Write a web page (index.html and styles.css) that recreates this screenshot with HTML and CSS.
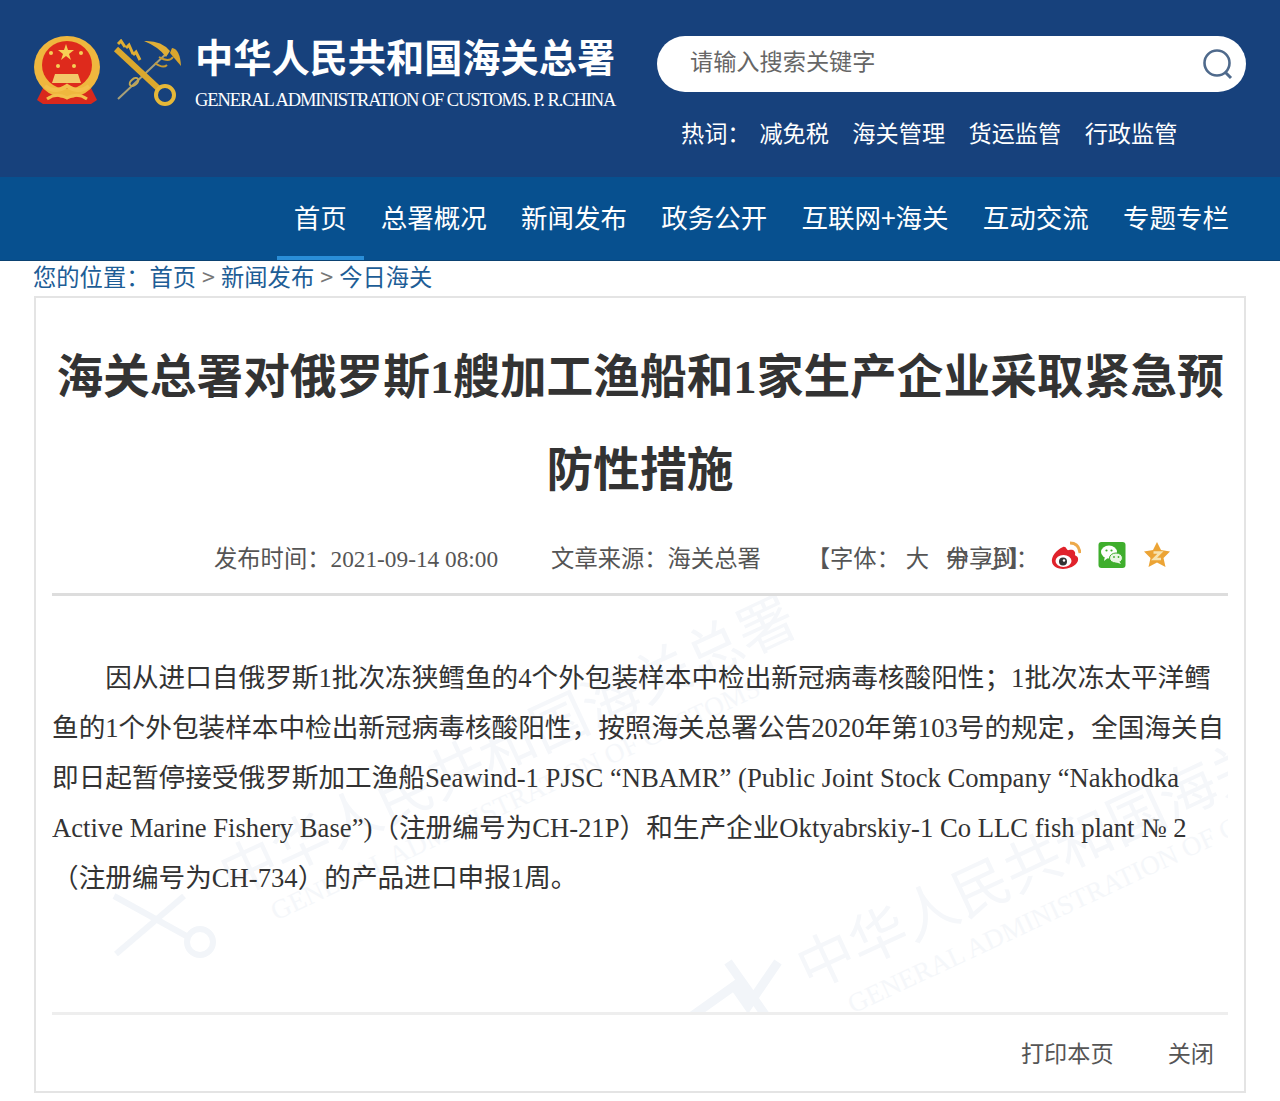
FILE: index.html
```html
<!DOCTYPE html>
<html lang="zh-CN">
<head>
	<meta charset="utf-8">
	<meta name="viewport" content="width=device-width, initial-scale=1">
	<title>海关总署对俄罗斯1艘加工渔船和1家生产企业采取紧急预防性措施</title>
	<link rel="stylesheet" href="styles.css">
</head>
<body>
<header class="top">
	<div class="brand">
		<svg class="emblem" viewBox="0 0 68 72" width="68" height="72">
			<path d="M10 52 L4 64 L10 68 L58 68 L64 64 L58 52 Z" fill="#d9281c"/>
			<ellipse cx="34" cy="31" rx="33" ry="31" fill="#efb73e"/>
			<ellipse cx="34" cy="29" rx="25" ry="24" fill="#de2a1c"/>
			<polygon points="33,8 35,14 41,14 36,18 38,24 33,20 28,24 30,18 25,14 31,14" fill="#f6cf55"/>
			<circle cx="18" cy="17" r="2" fill="#f6cf55"/>
			<circle cx="48" cy="17" r="2" fill="#f6cf55"/>
			<circle cx="25" cy="30" r="2" fill="#f6cf55"/>
			<circle cx="41" cy="30" r="2" fill="#f6cf55"/>
			<path d="M22 38 H45 L48 47 H19 Z" fill="#f3c869"/>
			<path d="M12 50 Q22 58 34 50 Q46 58 56 50" fill="none" stroke="#f3c04a" stroke-width="4"/>
			<path d="M14 63 Q24 56 34 62 Q44 56 54 63" fill="none" stroke="#f3c04a" stroke-width="3"/>
		</svg>
		<svg class="keys" viewBox="0 0 70 68" width="70" height="68">
			<path d="M54 14 L5 60" stroke="#a8a078" stroke-width="2" fill="none"/>
			<path d="M31 2 Q48 1 57 12 L53 18 Q46 8 31 2 Z" fill="#dfae37"/>
			<path d="M59 9 Q67 10 68 27 Q62 20 57 14 Z" fill="#d9a52d"/>
			<path d="M46 18 Q56 24 60 18 M42 24 Q50 30 54 26" stroke="#c79a30" stroke-width="2" fill="none"/>
			<path d="M3 10 L46 50" stroke="#dba82d" stroke-width="6" fill="none"/>
			<path d="M5 5 L8 2 L12 8 M13 9 L16 6 L20 15 M20 16 L23 13 L27 21" stroke="#e0ae33" stroke-width="3" fill="none"/>
			<circle cx="52" cy="56" r="9" fill="none" stroke="#e6b838" stroke-width="4"/>
			<ellipse cx="21" cy="43" rx="5" ry="3" fill="none" stroke="#c6a850" stroke-width="2" transform="rotate(-40 21 43)"/>
		</svg>
		<div class="brandText">
			<div class="brandCn">中华人民共和国海关总署</div>
			<div class="brandEn">GENERAL ADMINISTRATION OF CUSTOMS. P. R.CHINA</div>
		</div>
	</div>
	<div class="searchArea">
		<div class="searchBox">
			<span class="placeholder">请输入搜索关键字</span>
			<svg class="searchIcon" viewBox="0 0 32 32" width="32" height="32">
				<circle cx="15" cy="15" r="12.5" fill="none" stroke="#4f6a8c" stroke-width="2.6"/>
				<path d="M23 24 L29 30" stroke="#4f6a8c" stroke-width="3"/>
			</svg>
		</div>
		<ul class="hotWords">
			<li class="hotLabel">热词：</li>
			<li>减免税</li>
			<li>海关管理</li>
			<li>货运监管</li>
			<li>行政监管</li>
		</ul>
	</div>
</header>
<nav class="nav">
	<a class="active">首页</a>
	<a>总署概况</a>
	<a>新闻发布</a>
	<a>政务公开</a>
	<a>互联网+海关</a>
	<a>互动交流</a>
	<a>专题专栏</a>
</nav>
<div class="crumbs">您的位置：<a>首页</a><span class="sep">&gt;</span><a>新闻发布</a><span class="sep">&gt;</span><a>今日海关</a></div>
<section class="article">
	<h1 class="title">海关总署对俄罗斯1艘加工渔船和1家生产企业采取紧急预防性措施</h1>
	<div class="meta">
		<span class="metaTime">发布时间：2021-09-14 08:00</span>
		<span class="metaSource">文章来源：海关总署</span>
		<span class="metaFont">【字体： 大<a class="sizeMid">中</a><a class="sizeSmall">小</a>】<span class="shareLabel">分享到：</span></span>
		<div class="shareIcons">
			<svg viewBox="0 0 30 30" width="30" height="30">
				<path d="M12 7 C5 10 0 17 1 22 C2 28 10 30 16 28.500 C23 27 28 23 27 18 C26.500 16 24 15.500 24 15 C25 11 22 9 18 10 C15 11 16 6 12 7 Z" fill="#e0222b"/>
				<ellipse cx="12.500" cy="21" rx="8" ry="6" fill="#fff"/>
				<circle cx="12" cy="21.500" r="4" fill="#333"/>
				<circle cx="13" cy="20.500" r="1.200" fill="#fff"/>
				<path d="M19 3 Q28 3 29 13" fill="none" stroke="#eda94a" stroke-width="2.800"/>
			</svg>
			<svg viewBox="0 0 28 28" width="28" height="28">
				<rect x="0.500" y="1" width="27" height="26" rx="3" fill="#3fae2d"/>
				<ellipse cx="11" cy="11" rx="8" ry="6.500" fill="#fff"/>
				<path d="M7 15 L6 20 L11 16 Z" fill="#fff"/>
				<ellipse cx="18" cy="17" rx="6.500" ry="5" fill="#eaf6e4" stroke="#3fae2d"/>
				<path d="M21 20 L23 23 L17 21 Z" fill="#eaf6e4"/>
				<circle cx="8.500" cy="9.500" r="1.100" fill="#3fae2d"/>
				<circle cx="13.500" cy="9.500" r="1.100" fill="#3fae2d"/>
				<circle cx="16" cy="16" r="0.900" fill="#3fae2d"/>
				<circle cx="20.500" cy="16" r="0.900" fill="#3fae2d"/>
			</svg>
			<svg viewBox="0 0 28 28" width="28" height="28">
				<polygon points="14,1 18,9 27,10.500 20.500,17 22.500,26 14,21.500 5.500,26 7.500,17 1,10.500 10,9" fill="#eca435"/>
				<path d="M10.500 11.500 H17.500 L11 18 H18" fill="none" stroke="#f7e3b0" stroke-width="2.500"/>
			</svg>
		</div>
	</div>
	<div class="content">
		<svg class="wmKey keyOne" viewBox="0 0 110 70" width="110" height="70">
			<path d="M4 8 L80 50 M74 8 L6 66" stroke="#f2f5f9" stroke-width="6" fill="none"/>
			<circle cx="90" cy="54" r="13" fill="none" stroke="#f2f5f9" stroke-width="6"/>
		</svg>
		<svg class="wmKey keyTwo" viewBox="0 0 110 70" width="110" height="70">
			<path d="M4 60 L46 30 L60 50 L90 6 M40 6 L78 60" stroke="#f2f5f9" stroke-width="9" fill="none"/>
		</svg>
		<div class="watermark wmOne">
			<div class="wmCn">中华人民共和国海关总署</div>
			<div class="wmEn">GENERAL ADMINISTRATION OF CUSTOMS</div>
		</div>
		<div class="watermark wmTwo">
			<div class="wmCn">中华人民共和国海关总署</div>
			<div class="wmEn">GENERAL ADMINISTRATION OF CUSTOMS</div>
		</div>
		<p>因从进口自俄罗斯1批次冻狭鳕鱼的4个外包装样本中检出新冠病毒核酸阳性；1批次冻太平洋鳕鱼的1个外包装样本中检出新冠病毒核酸阳性，按照海关总署公告2020年第103号的规定，全国海关自即日起暂停接受俄罗斯加工渔船Seawind-1 PJSC “NBAMR” (Public Joint Stock Company “Nakhodka Active Marine Fishery Base”)（注册编号为CH-21P）和生产企业Oktyabrskiy-1 Co LLC fish plant № 2（注册编号为CH-734）的产品进口申报1周。</p>
	</div>
	<div class="tools">
		<a>打印本页</a>
		<a>关闭</a>
	</div>
</section>
</body>
</html>
```

FILE: styles.css
```css
*{
	padding: 0;
	margin: 0;
	box-sizing: border-box;
}
body{
	background-color: #fff;
	font-family: "Liberation Serif", "Noto Sans CJK SC", serif;
	color: #333;
	padding-bottom: 8px;
}
ul{
	list-style: none;
}
.top{
	height: 177px;
	background-color: #17417c;
	display: flex;
	justify-content: space-between;
	padding: 36px 34px 0 33px;
}
.brand{
	display: flex;
	align-items: flex-start;
}
.emblem{
	display: block;
}
.keys{
	display: block;
	margin: 3px 0 0 12px;
}
.brandText{
	margin-left: 12px;
	color: #fff;
}
.brandCn{
	font-size: 38.200px;
	font-weight: 700;
	line-height: 46px;
}
.brandEn{
	font-size: 18.500px;
	line-height: 24px;
	margin-top: 6px;
	letter-spacing: -1.100px;
	white-space: nowrap;
}
.searchArea{
	width: 589px;
}
.searchBox{
	height: 56px;
	border-radius: 28px;
	background-color: #fff;
	display: flex;
	justify-content: space-between;
	align-items: center;
	padding: 0 12px 0 33px;
}
.placeholder{
	font-size: 23.200px;
	line-height: 34px;
	margin-bottom: 8px;
	color: #666;
	font-family: "Noto Sans CJK SC", sans-serif;
}
.hotWords{
	display: flex;
	gap: 23.400px;
	margin: 22px 0 0 24px;
	font-size: 23.200px;
	line-height: 36px;
	color: #fff;
	font-family: "Noto Sans CJK SC", sans-serif;
}
.hotLabel{
	width: 55px;
	white-space: nowrap;
}
.nav{
	height: 84px;
	background-color: #07508f;
	display: flex;
	justify-content: flex-end;
	padding-right: 51px;
	gap: 34.200px;
	font-family: "Noto Sans CJK SC", sans-serif;
	font-size: 26.500px;
	line-height: 79px;
	color: #fff;
	border-bottom: 1px solid #0b4272;
}
.nav a{
	position: relative;
	height: 83px;
}
.nav .active::after{
	content: "";
	position: absolute;
	left: -17px;
	right: -17px;
	bottom: 0;
	height: 4px;
	background-color: #2a8ed8;
}
.crumbs{
	height: 35px;
	padding-left: 33px;
	font-family: "Noto Sans CJK SC", sans-serif;
	font-size: 23.300px;
	line-height: 30px;
	color: #1d5d96;
}
.sep{
	margin: 0 6px;
	color: #777;
}
.article{
	margin: 0 34px;
	height: 797px;
	border: 2px solid #e4e4e4;
	padding: 33px 16px 0;
}
.title{
	font-size: 46.700px;
	line-height: 93px;
	font-weight: 700;
	text-align: center;
	color: #333;
}
.meta{
	display: flex;
	align-items: center;
	height: 78px;
	margin-top: 1px;
	padding: 2px 0 0 162px;
	font-size: 23.300px;
	color: #555;
	border-bottom: 3px solid #ddd;
	white-space: nowrap;
}
.metaSource{
	margin-left: 53px;
}
.metaFont{
	position: relative;
	margin-left: 46px;
	width: 244px;
}
.sizeMid{
	margin-left: 17px;
}
.sizeSmall{
	margin-left: 15px;
}
.shareLabel{
	position: absolute;
	left: 139px;
	top: 0;
}
.shareIcons{
	display: flex;
	align-items: center;
	gap: 17px;
	margin-top: -4px;
}
.content{
	position: relative;
	overflow: hidden;
	height: 419px;
	padding-top: 57px;
	border-bottom: 3px solid #eee;
	font-size: 26.650px;
	line-height: 50px;
	color: #333;
}
.content p{
	position: relative;
	text-indent: 2em;
}
.watermark{
	position: absolute;
	color: #f5f7fa;
	transform: rotate(-25deg);
	transform-origin: left top;
	white-space: nowrap;
	pointer-events: none;
}
.wmOne{
	left: 158px;
	top: 254px;
}
.wmTwo{
	left: 735px;
	top: 347px;
}
.wmCn{
	font-size: 57px;
	font-weight: 400;
	line-height: 66px;
}
.wmEn{
	font-size: 27px;
	line-height: 34px;
	margin-left: 30px;
}
.wmKey{
	position: absolute;
}
.keyOne{
	left: 58px;
	top: 292px;
}
.keyTwo{
	left: 636px;
	top: 360px;
}
.tools{
	display: flex;
	justify-content: flex-end;
	gap: 54px;
	padding: 20px 14px 0 0;
	font-family: "Noto Sans CJK SC", sans-serif;
	font-size: 23.200px;
	line-height: 34px;
	color: #555;
}
```
